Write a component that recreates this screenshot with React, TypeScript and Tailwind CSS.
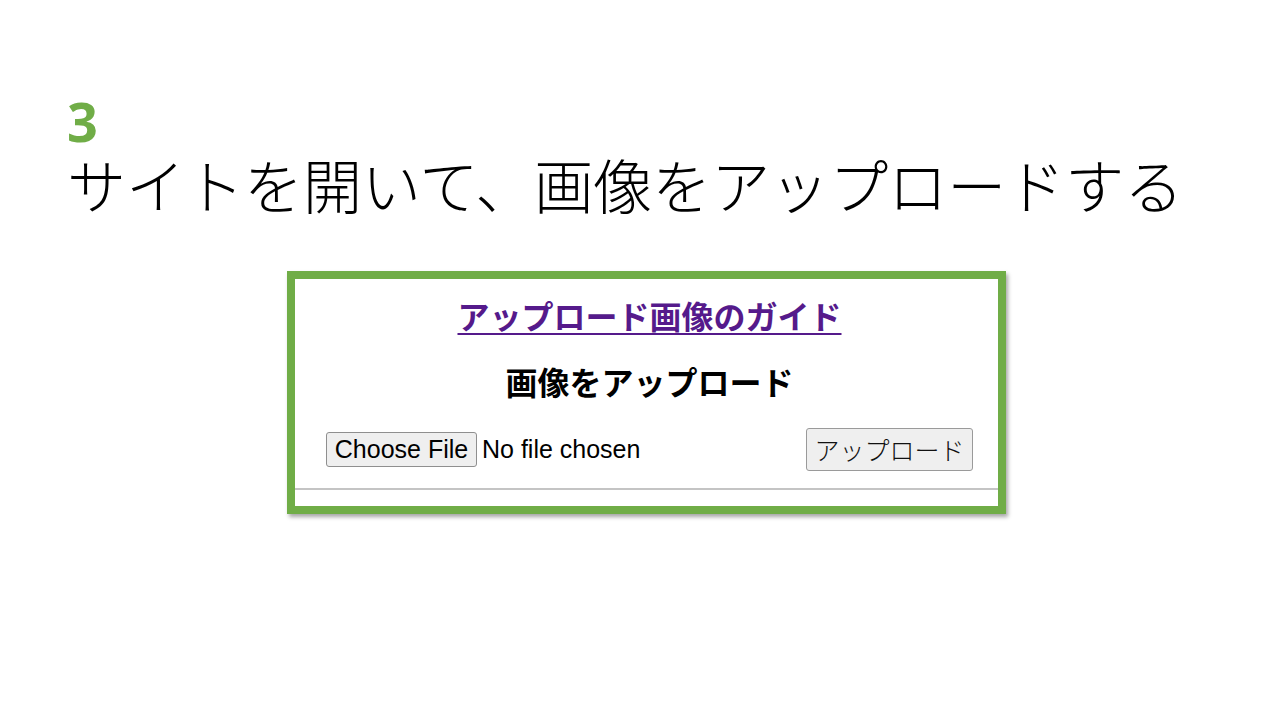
import React from "react";

export default function App() {
  return (
    <div className="w-[1280px] h-[720px] bg-white overflow-hidden relative">
      <div className="pl-[67px] pt-[94px]">
        <div
          className="text-[54px] leading-none font-bold text-[#70AD47] h-[54px]"
          style={{ fontFamily: '"Open Sans", "Noto Sans", sans-serif' }}
        >
          3
        </div>
        <div
          className="mt-[6px] text-[59px] leading-none font-extralight text-black whitespace-nowrap h-[59px]"
          style={{ fontFamily: '"Noto Sans CJK JP", sans-serif' }}
        >
          サイトを開いて、画像をアップロードする
        </div>
      </div>
      <div className="ml-[287px] mt-[58px] w-[719px] border-8 border-[#70AD47] bg-white shadow-[2px_3px_4px_rgba(0,0,0,0.35)]">
        <div
          className="flex flex-col pt-[20px] pb-[16px]"
          style={{ fontFamily: '"Liberation Sans", "Noto Sans CJK JP", sans-serif' }}
        >
          <div className="h-[32px] flex justify-center pl-[6px]">
            <a
              href="#"
              className="text-[32px] leading-[32px] font-bold text-[#551A8B] underline decoration-2 underline-offset-[4px] whitespace-nowrap"
              style={{ fontFamily: '"Noto Sans CJK JP", sans-serif' }}
            >
              アップロード画像のガイド
            </a>
          </div>
          <div
            className="mt-[34px] h-[32px] text-center text-[32px] leading-[32px] font-bold text-black pl-[6px]"
            style={{ fontFamily: '"Noto Sans CJK JP", sans-serif' }}
          >
            画像をアップロード
          </div>
          <div className="mt-[31px] h-[43px] flex items-center justify-between pl-[31px] pr-[25px]">
            <div className="flex items-center">
              <div className="h-[35px] w-[151px] flex items-center justify-center bg-[#efefef] border border-[#8f8f8f] rounded-[3px] text-[25px] text-black leading-none">
                Choose File
              </div>
              <span className="ml-[5px] text-[25px] text-black leading-none">No file chosen</span>
            </div>
            <div
              className="h-[43px] w-[167px] flex items-center justify-center bg-[#efefef] border border-[#9a9a9a] rounded-[3px] text-[25px] text-[#111] leading-none"
              style={{ fontFamily: '"Noto Sans CJK JP", sans-serif' }}
            >
              <span className="font-light">アップロード</span>
            </div>
          </div>
          <div className="mt-[17px] h-[2px] bg-[#c4c4c4]" />
        </div>
      </div>
    </div>
  );
}
